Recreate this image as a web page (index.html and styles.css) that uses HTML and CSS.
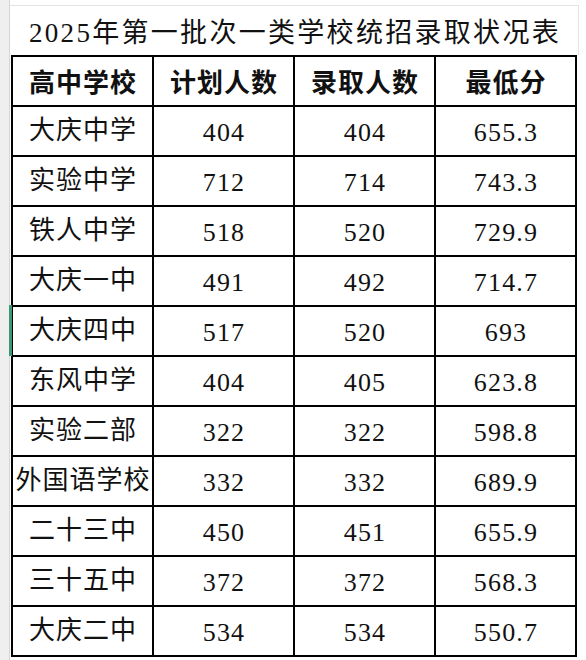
FILE: index.html
```html
<!DOCTYPE html>
<html lang="zh-CN">
<head>
<meta charset="utf-8">
<title>2025年第一批次一类学校统招录取状况表</title>
<link rel="stylesheet" href="styles.css">
</head>
<body>
<div class="page">
  <div class="gutter"></div>
  <div class="sheet">
    <div class="title">2025年第一批次一类学校统招录取状况表</div>
    <div class="grid">
      <div class="cell head">高中学校</div><div class="cell head">计划人数</div><div class="cell head">录取人数</div><div class="cell head">最低分</div>
      <div class="cell">大庆中学</div><div class="cell num">404</div><div class="cell num">404</div><div class="cell num">655.3</div>
      <div class="cell">实验中学</div><div class="cell num">712</div><div class="cell num">714</div><div class="cell num">743.3</div>
      <div class="cell">铁人中学</div><div class="cell num">518</div><div class="cell num">520</div><div class="cell num">729.9</div>
      <div class="cell">大庆一中</div><div class="cell num">491</div><div class="cell num">492</div><div class="cell num">714.7</div>
      <div class="cell">大庆四中</div><div class="cell num">517</div><div class="cell num">520</div><div class="cell num">693</div>
      <div class="cell">东风中学</div><div class="cell num">404</div><div class="cell num">405</div><div class="cell num">623.8</div>
      <div class="cell">实验二部</div><div class="cell num">322</div><div class="cell num">322</div><div class="cell num">598.8</div>
      <div class="cell">外国语学校</div><div class="cell num">332</div><div class="cell num">332</div><div class="cell num">689.9</div>
      <div class="cell">二十三中</div><div class="cell num">450</div><div class="cell num">451</div><div class="cell num">655.9</div>
      <div class="cell">三十五中</div><div class="cell num">372</div><div class="cell num">372</div><div class="cell num">568.3</div>
      <div class="cell">大庆二中</div><div class="cell num">534</div><div class="cell num">534</div><div class="cell num">550.7</div>
    </div>
  </div>
  <div class="select-mark"></div>
</div>
</body>
</html>
```

FILE: styles.css
```css
html, body {
  margin: 0;
  padding: 0;
  background: #ffffff;
}

.page {
  position: relative;
  display: flex;
  width: 586px;
  height: 660px;
  overflow: hidden;
}

.gutter {
  width: 9px;
  flex: none;
  background: #efefef;
  border-right: 1px solid #d6d6d6;
}

.sheet {
  padding-top: 5px;
  padding-left: 1px;
  display: flex;
  flex-direction: column;
}

.title {
  height: 49px;
  width: 566px;
  margin-left: -1px;
  border-top: 1px solid #e3e3e3;
  border-right: 1px solid #e3e3e3;
  display: flex;
  align-items: center;
  justify-content: center;
  font-family: "Liberation Serif", "Noto Sans CJK SC", serif;
  font-size: 27px;
  letter-spacing: 2.3px;
  padding-left: 2px;
  box-sizing: content-box;
  color: #111111;
  white-space: nowrap;
}

.grid {
  display: grid;
  grid-template-columns: repeat(4, 139px);
  grid-auto-rows: 48px;
  gap: 2px;
  padding: 2px;
  background: #000000;
  width: max-content;
}

.cell {
  background: #ffffff;
  display: flex;
  align-items: center;
  justify-content: center;
  font-family: "Liberation Serif", "Noto Sans CJK SC", serif;
  font-size: 26px;
  letter-spacing: 1px;
  padding-left: 1px;
  color: #111111;
  line-height: 1;
  white-space: nowrap;
}

.head {
  font-family: "Noto Sans CJK SC", sans-serif;
  font-weight: 700;
  font-size: 26px;
  letter-spacing: 1px;
}

.num {
  font-size: 26px;
  letter-spacing: 1.2px;
  padding-top: 4px;
}

.select-mark {
  position: absolute;
  left: 9px;
  top: 305px;
  width: 3px;
  height: 51px;
  background: #3a9873;
}
```
